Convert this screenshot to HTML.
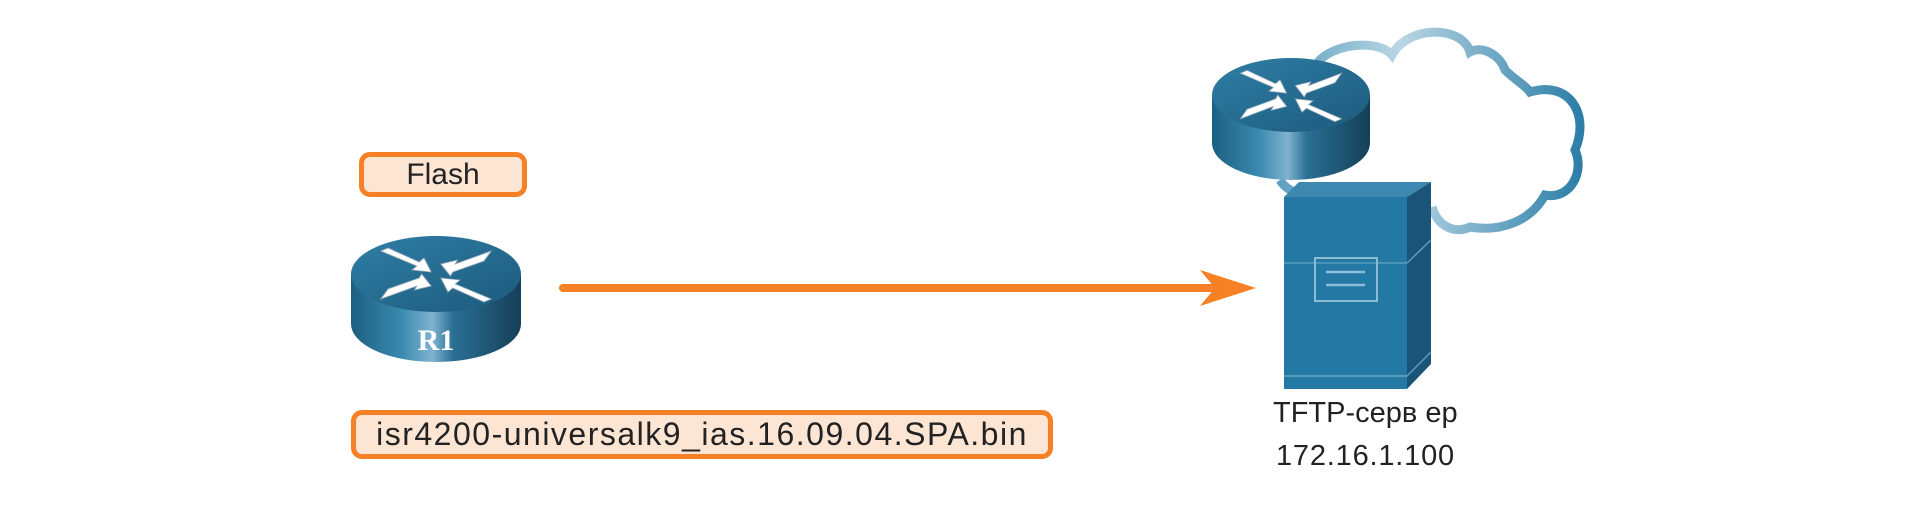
<!DOCTYPE html>
<html><head><meta charset="utf-8"><style>
body{margin:0;width:1920px;height:523px;background:#fff;overflow:hidden;position:relative;font-family:"Liberation Sans",sans-serif}
.box{position:absolute;border:5px solid #f58025;border-radius:11px;background:#fde5d4;box-sizing:border-box;color:#222;text-align:center;white-space:nowrap}
.t{position:absolute;color:#222;font-size:29px;white-space:nowrap}
</style></head><body>
<div class="box" style="left:359px;top:152px;width:168px;height:45px;line-height:35px;font-size:30px">Flash</div>
<div class="box" style="left:351px;top:410px;width:702px;height:49px;line-height:38px;font-size:32px;letter-spacing:1.5px">isr4200-universalk9_ias.16.09.04.SPA.bin</div>
<svg width="1920" height="523" style="position:absolute;left:0;top:0">
<defs>
<linearGradient id="body" x1="0" x2="1" y1="0" y2="0">
<stop offset="0" stop-color="#1c5f80"/><stop offset="0.3" stop-color="#3b8ab0"/><stop offset="0.48" stop-color="#7fb3cf"/><stop offset="0.6" stop-color="#2a6f94"/><stop offset="1" stop-color="#153f58"/></linearGradient>
<linearGradient id="top" x1="0" x2="1" y1="0" y2="1">
<stop offset="0" stop-color="#2f7ea6"/><stop offset="1" stop-color="#1c5a7c"/></linearGradient>
<linearGradient id="cl" x1="0" x2="1" y1="0" y2="0">
<stop offset="0" stop-color="#5fa0c2"/><stop offset="0.4" stop-color="#b9d6e5"/><stop offset="1" stop-color="#2d7ea8"/></linearGradient>
<g id="arr" fill="#fff" stroke="#9ab" stroke-width="0.8">
<path d="M-46,-24 L-40,-27 L-14,-13 L-10,-17 L-4,-3 L-20,-5 L-16,-9 Z"/>
<path d="M46,-24 L40,-14 L14,-3 L12,1 L4,-11 L18,-15 L16,-11 Z"/>
<path d="M-46,24 L-40,14 L-14,3 L-12,-1 L-4,11 L-18,15 L-16,11 Z"/>
<path d="M46,24 L40,27 L14,13 L10,17 L4,3 L20,5 L16,9 Z"/>
</g>
</defs>
<path d="M1318,62 C1335,42 1380,40 1392,55 C1408,25 1462,25 1470,52 C1482,45 1500,55 1505,70 C1515,80 1525,85 1530,92 C1570,80 1590,115 1575,150 C1585,172 1570,200 1545,195 C1530,222 1500,232 1470,227 C1455,234 1438,227 1432,207 M1280,180 C1290,196 1310,196 1318,188" fill="none" stroke="url(#cl)" stroke-width="9"/>
<path d="M351,274 L351,324 A85,38 0 0 0 521,324 L521,274 Z" fill="url(#body)"/>
<ellipse cx="436" cy="274" rx="85" ry="38" fill="url(#top)"/>
<use href="#arr" transform="translate(436,275) scale(1.2,1.0)"/>
<text x="436" y="350" text-anchor="middle" fill="#fff" font-family="Liberation Serif" font-weight="bold" font-size="30">R1</text>
<path d="M1212,95 L1212,143 A79,37 0 0 0 1370,143 L1370,95 Z" fill="url(#body)"/>
<ellipse cx="1291" cy="95" rx="79" ry="37" fill="url(#top)"/>
<use href="#arr" transform="translate(1291,96) scale(1.1,0.95)"/>
<line x1="563" y1="288" x2="1215" y2="288" stroke="#f58025" stroke-width="8" stroke-linecap="round"/>
<path d="M1200,270 L1256,288 L1200,306 L1215,288 Z" fill="#f58025"/>
<polygon points="1284,197 1299,182 1431,182 1407,197" fill="#3d88b0"/>
<polygon points="1407,197 1431,182 1431,364 1407,389" fill="#1a5577"/>
<rect x="1284" y="197" width="123" height="192" fill="#2378a4"/>
<line x1="1284" y1="263" x2="1407" y2="263" stroke="#5a9cc0" stroke-width="1.5"/>
<line x1="1407" y1="263" x2="1431" y2="240" stroke="#5a9cc0" stroke-width="1.5"/>
<line x1="1284" y1="376" x2="1407" y2="376" stroke="#5a9cc0" stroke-width="2"/>
<line x1="1407" y1="376" x2="1431" y2="352" stroke="#5a9cc0" stroke-width="1.5"/>
<rect x="1315" y="258" width="62" height="43" fill="none" stroke="#8dbcd6" stroke-width="2"/>
<line x1="1326" y1="272" x2="1365" y2="272" stroke="#8dbcd6" stroke-width="2.5"/>
<line x1="1326" y1="285" x2="1365" y2="285" stroke="#8dbcd6" stroke-width="2.5"/>
</svg>
<div class="t" style="left:1273px;top:397px">TFTP-серв ер</div>
<div class="t" style="left:1276px;top:440px;letter-spacing:0.8px">172.16.1.100</div>
</body></html>
